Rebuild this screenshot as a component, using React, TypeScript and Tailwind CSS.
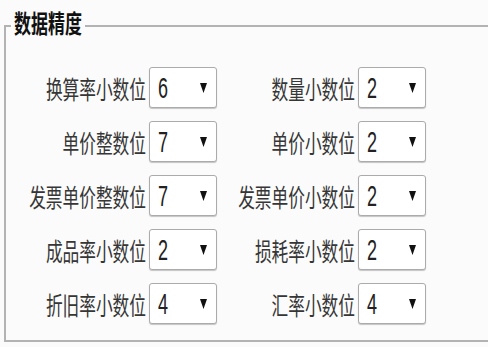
const rows = [
  ["换算率小数位", "6", "数量小数位", "2"],
  ["单价整数位", "7", "单价小数位", "2"],
  ["发票单价整数位", "7", "发票单价小数位", "2"],
  ["成品率小数位", "2", "损耗率小数位", "2"],
  ["折旧率小数位", "4", "汇率小数位", "4"],
];

const cjk = "font-['Microsoft_YaHei','Noto_Sans_CJK_SC',sans-serif]";

const Label = ({ text }: { text: string }) => (
  <div className="flex justify-end items-center">
    <span className={`inline-block ${cjk} text-[16.7px] leading-[24px] text-[#363636] [transform:scaleY(1.5)]`}>
      {text}
    </span>
  </div>
);

const Select = ({ value }: { value: string }) => (
  <div className="h-[41px] flex items-center justify-between pl-[8px] pr-[9px] bg-white border border-[#ababab] rounded-[3px] shadow-[0_1px_1px_rgba(0,0,0,0.22)]">
    <span className="inline-block font-['Liberation_Sans',Arial,sans-serif] text-[18px] leading-[20px] text-[#222] [transform:scaleY(1.6)]">
      {value}
    </span>
    <svg width="7" height="10" viewBox="0 0 7 10" className="mt-[1px]">
      <polygon points="0,0 7,0 3.5,10" fill="#111" />
    </svg>
  </div>
);

export default function App() {
  return (
    <div className="w-[488px] h-[347px] overflow-hidden bg-[#fbfbfb] pt-[10px]">
      <fieldset className="ml-[4px] w-[500px] border-2 border-[#b3b3b3] pt-[26px] pb-[16px]">
        <legend className="ml-[5px] px-[3px] leading-[30px]">
          <span className={`inline-block ${cjk} text-[17px] font-bold text-[#111] [transform:translateY(-2px)_scaleY(1.45)]`}>
            数据精度
          </span>
        </legend>
        <div className="grid grid-cols-[140px_68px_135px_68px] gap-x-[3px] gap-y-[13px]">
          {rows.map((r) => (
            <div key={r[0]} className="contents">
              <Label text={r[0]} />
              <Select value={r[1]} />
              <Label text={r[2]} />
              <Select value={r[3]} />
            </div>
          ))}
        </div>
      </fieldset>
    </div>
  );
}
